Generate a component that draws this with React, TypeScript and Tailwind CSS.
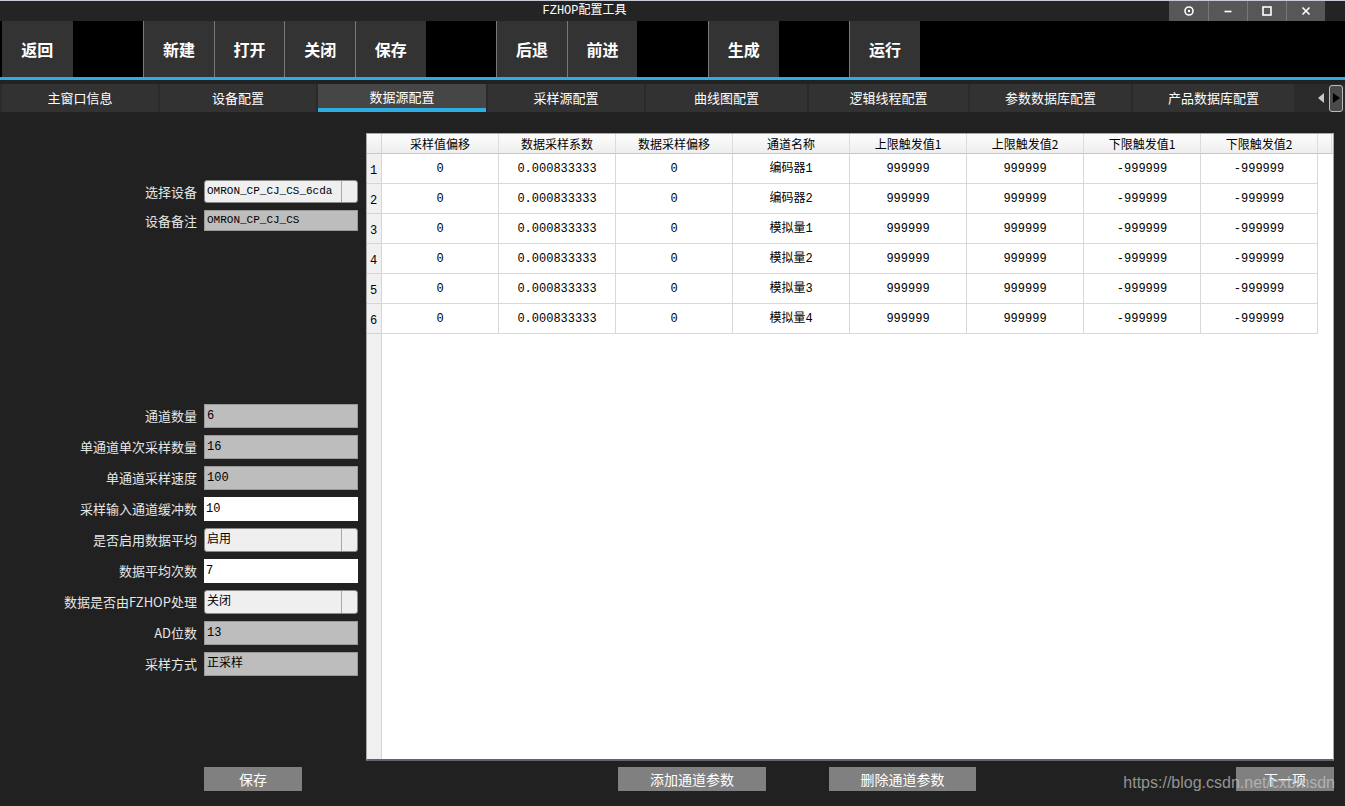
import React from 'react';

const cjk = '"Noto Sans CJK SC", "Liberation Sans", sans-serif';

const toolbar: (string | null)[] = [
  '返回', null, '新建', '打开', '关闭', '保存', null, '后退', '前进', null, '生成', null, '运行',
];

const tabs = [
  { label: '主窗口信息', w: 'w-[156px]' },
  { label: '设备配置', w: 'w-[156px]' },
  { label: '数据源配置', w: 'w-[168px]', active: true },
  { label: '采样源配置', w: 'w-[156px]' },
  { label: '曲线图配置', w: 'w-[161px]' },
  { label: '逻辑线程配置', w: 'w-[159px]' },
  { label: '参数数据库配置', w: 'w-[161px]' },
  { label: '产品数据库配置', w: 'w-[161px]' },
];

const headers = ['采样值偏移', '数据采样系数', '数据采样偏移', '通道名称', '上限触发值1', '上限触发值2', '下限触发值1', '下限触发值2'];
const channels = ['编码器1', '编码器2', '模拟量1', '模拟量2', '模拟量3', '模拟量4'];

type Field = { label: string; value: string; kind: 'disabled' | 'select' | 'input' };

const lowerFields: Field[] = [
  { label: '通道数量', value: '6', kind: 'disabled' },
  { label: '单通道单次采样数量', value: '16', kind: 'disabled' },
  { label: '单通道采样速度', value: '100', kind: 'disabled' },
  { label: '采样输入通道缓冲数', value: '10', kind: 'input' },
  { label: '是否启用数据平均', value: '启用', kind: 'select' },
  { label: '数据平均次数', value: '7', kind: 'input' },
  { label: '数据是否由FZHOP处理', value: '关闭', kind: 'select' },
  { label: 'AD位数', value: '13', kind: 'disabled' },
  { label: '采样方式', value: '正采样', kind: 'disabled' },
];

const valueFont = '"Liberation Mono", "Noto Sans CJK SC", monospace';

function FieldBox({ value, kind, h = 'h-[24px]' }: { value: string; kind: Field['kind']; h?: string }) {
  if (kind === 'select') {
    return (
      <div className={`w-[154px] ${h} flex bg-[#efefef] border border-[#8a8a8a] rounded-[3px] text-black text-[12px]`} style={{ fontFamily: valueFont }}>
        <div className="flex-1 flex items-center pl-[2px] whitespace-nowrap">{value}</div>
        <div className="w-[16px] border-l border-[#a8a8a8]" />
      </div>
    );
  }
  const bg = kind === 'disabled' ? 'bg-[#bdbdbd] border border-[#9a9a9a]' : 'bg-white';
  return (
    <div className={`w-[154px] ${h} flex items-center pl-[2px] text-black text-[12px] ${bg}`} style={{ fontFamily: valueFont }}>
      {value}
    </div>
  );
}

function Row({ label, children }: { label: string; children: React.ReactNode }) {
  return (
    <div className="flex items-center">
      <div className="w-[197px] text-right text-[13px] text-[#e6e6e6] whitespace-nowrap" style={{ fontFamily: cjk }}>
        {label}
      </div>
      <div className="ml-[7px]">{children}</div>
    </div>
  );
}

function WinIcon({ kind }: { kind: string }) {
  return (
    <svg width="12" height="12" viewBox="0 0 12 12" fill="none" stroke="white" strokeWidth="1.6">
      {kind === 'pin' && (
        <>
          <circle cx="6" cy="6" r="4" />
          <circle cx="6" cy="6" r="1.2" fill="white" stroke="none" />
        </>
      )}
      {kind === 'min' && <line x1="2.5" y1="6.5" x2="9.5" y2="6.5" />}
      {kind === 'max' && <rect x="2" y="2" width="8" height="8" />}
      {kind === 'close' && (
        <>
          <line x1="2.5" y1="2.5" x2="9.5" y2="9.5" />
          <line x1="9.5" y1="2.5" x2="2.5" y2="9.5" />
        </>
      )}
    </svg>
  );
}

export default function App() {
  return (
    <div className="relative w-[1345px] h-[806px] overflow-hidden bg-[#212121] flex flex-col" style={{ fontFamily: cjk }}>
      {/* Title bar */}
      <div className="h-[21px] flex bg-[#242424] border-t border-[#c8ccd4]">
        <div className="flex-1 flex items-center justify-center text-[12px] text-white" style={{ fontFamily: valueFont }}>
          FZHOP配置工具
        </div>
        <div className="flex mr-[20px]">
          {['pin', 'min', 'max', 'close'].map((k, i) => (
            <div key={k} className={`w-[39px] h-[20px] flex items-center justify-center bg-[#575757] ${i > 0 ? 'border-l border-[#777]' : ''}`}>
              <WinIcon kind={k} />
            </div>
          ))}
        </div>
      </div>

      {/* Toolbar */}
      <div className="h-[56px] bg-black pl-[2px] grid grid-cols-[repeat(13,70.6px)]">
        {toolbar.map((t, i) =>
          t ? (
            <div
              key={i}
              className={`flex items-center justify-center bg-[#333333] text-white text-[16px] font-bold ${i > 0 ? 'border-l border-[#7a7a7a]' : ''}`}
            >
              {t}
            </div>
          ) : (
            <div key={i} />
          )
        )}
      </div>

      <div className="h-[3px] bg-[#2eaee0]" />
      <div className="h-[4px] bg-[#222]" />

      {/* Tabs */}
      <div className="h-[28px] flex bg-[#2a2a2a] pl-[2px] gap-[2px]">
        {tabs.map((t) => (
          <div
            key={t.label}
            className={`${t.w} relative flex justify-center text-[13px] text-white ${t.active ? 'bg-[#464646] items-start pt-[3px]' : 'bg-[#323232] items-center'}`}
          >
            {t.label}
            {t.active && <div className="absolute left-0 right-0 bottom-0 h-[4px] bg-[#2eaee0]" />}
          </div>
        ))}
        <div className="flex-1 flex items-center justify-end pr-[2px] gap-[5px]">
          <svg width="6" height="10" viewBox="0 0 6 10">
            <polygon points="6,0 6,10 0,5" fill="#c8c8c8" />
          </svg>
          <div className="w-[14px] h-[27px] rounded-[3px] border border-[#bdbdbd] bg-[#4a4a4a] flex items-center justify-center overflow-hidden">
            <svg width="7" height="10" viewBox="0 0 7 10">
              <polygon points="0,0 7,5 0,10" fill="black" />
            </svg>
          </div>
        </div>
      </div>

      {/* Main */}
      <div className="flex h-[649px]">
        {/* Left form */}
        <div className="w-[366px] flex flex-col">
          <div className="mt-[68px] flex flex-col gap-[7px]">
            <Row label="选择设备">
              <div className="w-[154px] h-[23px] flex bg-[#efefef] border border-[#8a8a8a] rounded-[3px] text-black text-[11px]" style={{ fontFamily: valueFont }}>
                <div className="flex-1 flex items-center pl-[2px] whitespace-nowrap">OMRON_CP_CJ_CS_6cda</div>
                <div className="w-[16px] border-l border-[#a8a8a8]" />
              </div>
            </Row>
            <Row label="设备备注">
              <div className="w-[154px] h-[21px] flex items-center pl-[2px] bg-[#bdbdbd] border border-[#9a9a9a] text-black text-[11px]" style={{ fontFamily: valueFont }}>
                OMRON_CP_CJ_CS
              </div>
            </Row>
          </div>
          <div className="mt-[173px] flex flex-col gap-[7px]">
            {lowerFields.map((f) => (
              <Row key={f.label} label={f.label}>
                <FieldBox value={f.value} kind={f.kind} />
              </Row>
            ))}
          </div>
        </div>

        {/* Table */}
        <div className="mt-[21px] w-[968px] h-[628px] bg-white border border-[#a8a8a8] border-b-[#5e6470] border-b-2 flex">
          <div className="w-[15px] bg-[#f0f0f0] border-r border-[#d6d6d6] flex flex-col">
            <div className="h-[20px] border-b border-[#c8c8c8] bg-[linear-gradient(#fbfbfb,#ececec)]" />
            {channels.map((_, i) => (
              <div key={i} className="h-[30px] border-b border-[#d6d6d6] flex items-center pl-[3px] pt-[4px] text-[12px] text-black" style={{ fontFamily: valueFont }}>
                {i + 1}
              </div>
            ))}
          </div>
          <div className="flex-1 flex flex-col">
            <div className="h-[20px] flex border-b border-[#c8c8c8] bg-[linear-gradient(#fdfdfd,#eeeeee)]">
              {headers.map((h) => (
                <div key={h} className="w-[117px] border-r border-[#dcdcdc] flex items-center justify-center text-[12px] text-black">
                  {h}
                </div>
              ))}
              <div className="w-[14px] border-r border-[#dcdcdc]" />
            </div>
            {channels.map((c) => (
              <div key={c} className="h-[30px] flex">
                {['0', '0.000833333', '0', c, '999999', '999999', '-999999', '-999999'].map((v, j) => (
                  <div
                    key={j}
                    className="w-[117px] border-r border-b border-[#d8d8d8] flex items-center justify-center text-[12px] text-black"
                    style={{ fontFamily: valueFont }}
                  >
                    {v}
                  </div>
                ))}
              </div>
            ))}
          </div>
        </div>
      </div>

      {/* Bottom buttons */}
      <div className="flex pt-[6px] text-white text-[14px]">
        <div className="ml-[204px] w-[98px] h-[24px] bg-[#808080] flex items-center justify-center">保存</div>
        <div className="ml-[316px] w-[148px] h-[24px] bg-[#808080] flex items-center justify-center">添加通道参数</div>
        <div className="ml-[63px] w-[147px] h-[24px] bg-[#808080] flex items-center justify-center">删除通道参数</div>
        <div className="ml-[260px] w-[98px] h-[24px] bg-[#808080] flex items-center justify-center">下一项</div>
      </div>

      {/* Watermark */}
      <div
        className="absolute right-[10px] bottom-[11px] text-[16px] text-[rgba(200,200,200,0.7)]"
        style={{ fontFamily: '"Liberation Sans", Arial, sans-serif' }}
      >
        https://blog.csdn.net/cxbmsdn
      </div>
    </div>
  );
}
